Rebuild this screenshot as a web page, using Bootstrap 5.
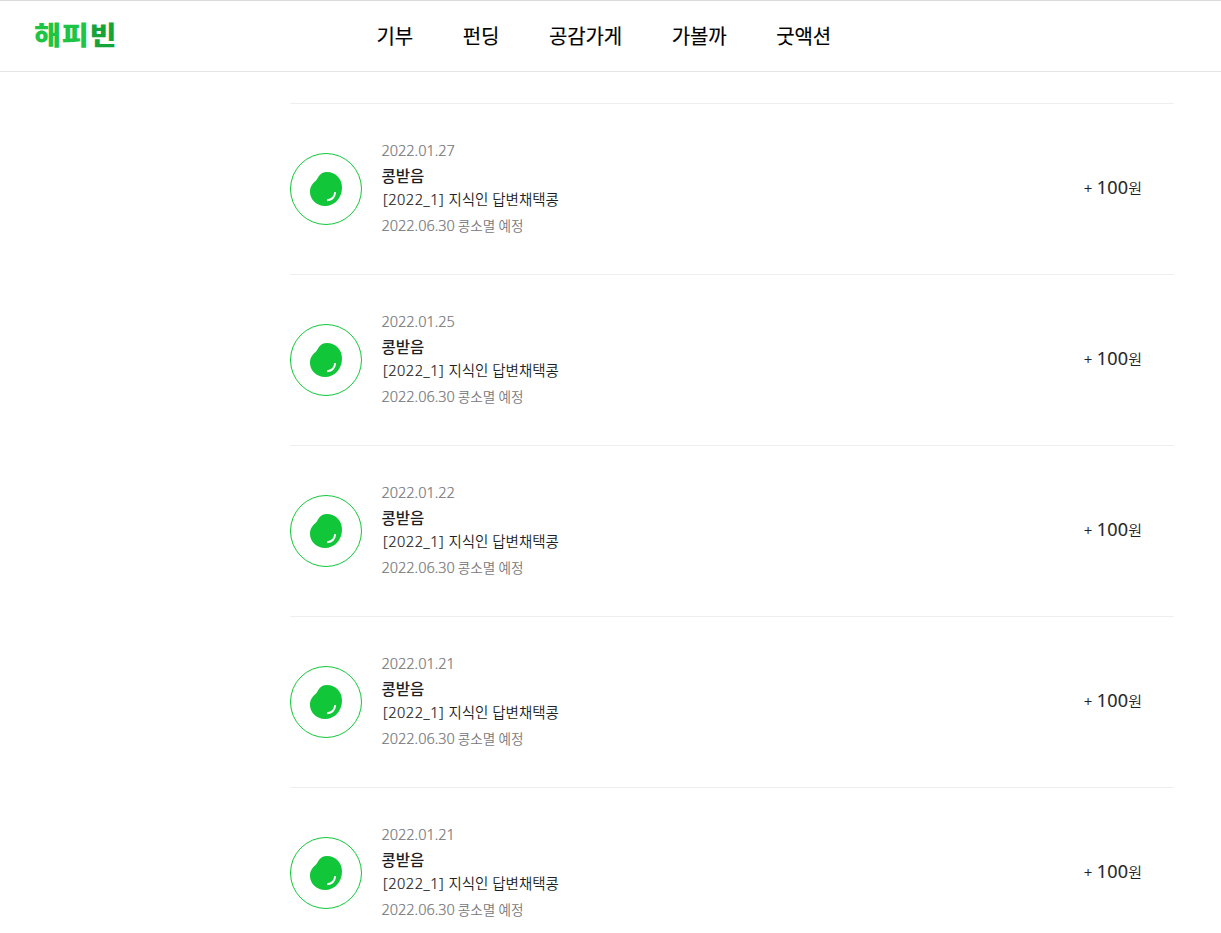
<!DOCTYPE html>
<html lang="ko">
<head>
  <meta charset="UTF-8" />
  <meta name="viewport" content="width=device-width, initial-scale=1.0" />
  <title>해피빈</title>
  <link href="https://cdn.jsdelivr.net/npm/bootstrap@5.3.0/dist/css/bootstrap.min.css" rel="stylesheet" />
  <style>
    body {
      font-family: "Open Sans", "Noto Sans CJK KR", sans-serif;
      color: #1e1e23;
      background: #fff;
      overflow: hidden;
    }
    .site-header {
      height: 72px;
      border-top: 1px solid #dadada;
      border-bottom: 1px solid #e5e5e5;
      padding-left: 33.5px;
    }
    .brand-logo {
      width: 343px;
      padding-bottom: 5px;
      font: 900 26px/1 "Noto Sans CJK KR", sans-serif;
      color: #1ec545;
    }
    .brand-logo .wordmark {
      display: inline-block;
      letter-spacing: 0.6px;
      transform: scaleX(1.13);
      transform-origin: left;
    }
    .brand-logo .last {
      color: #14a43a;
    }
    .main-menu {
      gap: 49.6px;
      font: 400 20px/30px "Noto Sans CJK KR", sans-serif;
      letter-spacing: -0.1px;
      -webkit-text-stroke: 0.15px #000;
    }
    .main-menu a {
      color: #000;
    }
    .history {
      width: 884px;
      margin: 31px 0 0 290px;
    }
    .history-item {
      height: 171px;
      border-top: 1px solid #eee;
      padding-right: 32px;
    }
    .bean-icon {
      width: 72px;
      height: 72px;
      margin-right: 19.5px;
    }
    .info {
      padding-bottom: 3px;
    }
    .info div {
      height: 25px;
      line-height: 25px;
      white-space: nowrap;
    }
    .info .date,
    .info .num {
      font-size: 14.5px;
      color: #77777a;
      -webkit-text-stroke: 0.2px #77777a;
    }
    .info .date,
    .info .num,
    .info .term {
      font-family: "Noto Sans", "Open Sans", sans-serif;
      font-weight: 300;
    }
    .info .expire {
      font-size: 13.6px;
      font-weight: 350;
      color: #77777a;
      word-spacing: -0.5px;
    }
    .info .kind {
      padding-top: 1px;
      font-size: 15.5px;
      font-weight: 500;
    }
    .info .detail {
      padding-left: 1.5px;
      font-size: 14.5px;
      font-weight: 350;
      line-height: 23px;
    }
    .info .term {
      letter-spacing: 0.55px;
      margin-right: 0.5px;
      -webkit-text-stroke: 0.2px #1e1e23;
    }
    .amount {
      padding-bottom: 3px;
      font-size: 15px;
      line-height: 24px;
      word-spacing: 0.5px;
    }
    .amount .won {
      font-weight: 350;
    }
    .amount strong {
      font-size: 18px;
      font-weight: 400;
      letter-spacing: 0.2px;
      -webkit-text-stroke: 0.2px #1e1e23;
    }
  </style>
</head>
<body>
  <header class="site-header d-flex align-items-center">
    <a href="#" class="brand-logo text-decoration-none"><span class="wordmark">해피<span class="last">빈</span></span></a>
    <nav class="main-menu d-flex">
      <a href="#" class="text-decoration-none">기부</a>
      <a href="#" class="text-decoration-none">펀딩</a>
      <a href="#" class="text-decoration-none">공감가게</a>
      <a href="#" class="text-decoration-none">가볼까</a>
      <a href="#" class="text-decoration-none">굿액션</a>
    </nav>
  </header>

  <main>
    <ul id="history" class="history list-unstyled mb-0"></ul>
  </main>

  <script src="https://cdn.jsdelivr.net/npm/bootstrap@5.3.0/dist/js/bootstrap.bundle.min.js"></script>
  <script>
    const dates = ['2022.01.27', '2022.01.25', '2022.01.22', '2022.01.21', '2022.01.21'];
    const historyEl = document.getElementById('history');

    dates.forEach(date => {
      const li = document.createElement('li');
      li.className = 'history-item d-flex align-items-center';
      li.innerHTML = `
        <svg class="bean-icon flex-shrink-0" viewBox="0 0 72 72" fill="none">
          <circle cx="36" cy="36" r="35.5" stroke="#12c639" />
          <path d="M37 19C45.5 19 52 25.5 52 34.5C52 45 44.5 53 35 53C26.5 53 20 46.5 20 39C20 33.5 22.5 30.5 25.5 28C28.5 25.5 29 19 37 19Z" fill="#12c639" />
          <path d="M45.2 39.2C44.8 43.4 42 46.9 37.2 47.3" stroke="#fff" stroke-width="1.9" />
        </svg>
        <div class="info flex-grow-1">
          <div class="date">${date}</div>
          <div class="kind">콩받음</div>
          <div class="detail"><span class="term">[2022_1]</span> 지식인 답변채택콩</div>
          <div class="expire"><span class="num">2022.06.30</span> 콩소멸 예정</div>
        </div>
        <div class="amount">+ <strong>100</strong><span class="won">원</span></div>`;
      historyEl.appendChild(li);
    });
  </script>
</body>
</html>
